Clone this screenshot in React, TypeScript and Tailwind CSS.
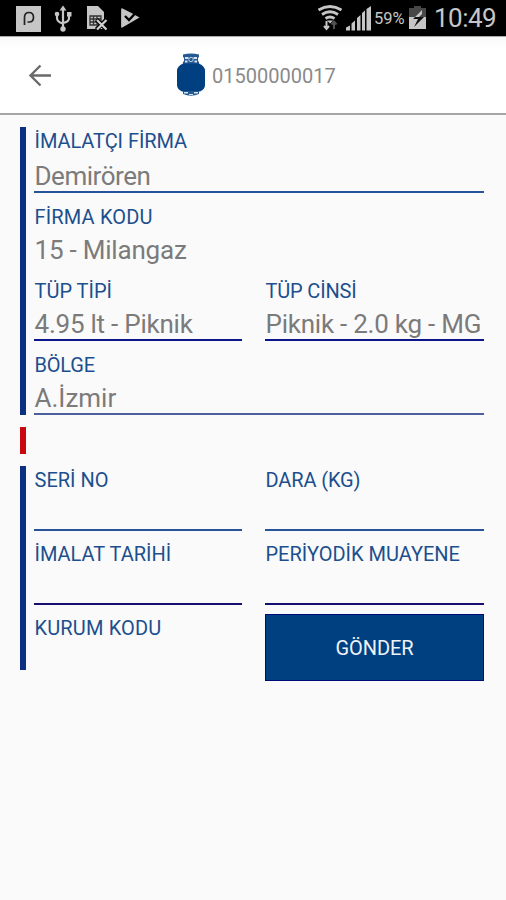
import type { ReactNode } from 'react';

function Label({ children, spacing = '' }: { children: ReactNode; spacing?: string }) {
  return (
    <div className={`h-6 whitespace-nowrap pl-[0.5px] text-[20px] leading-6 text-[#1c4f8e] ${spacing}`}>{children}</div>
  );
}

function Value({ children, className = '' }: { children?: ReactNode; className?: string }) {
  return (
    <div className={`h-[33px] whitespace-nowrap pl-[0.5px] text-[26px] leading-8 text-[#7b7b7b] ${className}`}>
      {children}
    </div>
  );
}

function StatusBar() {
  return (
    <header className="flex h-9 items-center bg-black text-[#c6c6c6]">
      <svg className="ml-4 h-[27px] w-[25px]" viewBox="0 0 25 27">
        <rect width="25" height="26" y="1" fill="#c6c6c6" />
        <path d="M8.500 20V12.500Q8.500 7.500 13 7.500t4.500 4.800-4.500 4.700H11.500" fill="none" stroke="#222" strokeWidth="1.700" />
      </svg>
      <svg className="ml-[13px] h-[28px] w-[18px]" viewBox="0 0 18 28" fill="none" stroke="#c6c6c6" strokeWidth="2.200">
        <path d="M9 4v20M3 10v4q0 4 6 5.500M15 10v4q0 4-6 5" />
        <path d="M9 1.500l3.500 5h-7z" fill="#c6c6c6" stroke="none" />
        <circle cx="9" cy="25" r="2.700" fill="#c6c6c6" stroke="none" />
        <circle cx="3" cy="10" r="2.300" fill="#c6c6c6" stroke="none" />
        <path d="M13 8h4.500v4.500H13z" fill="#c6c6c6" stroke="none" />
      </svg>
      <svg className="ml-[14px] h-[26px] w-[22px]" viewBox="0 0 22 26">
        <path d="M1 1h11l6 6v17H1z" fill="#c6c6c6" />
        <path d="M4 11h11v9H4zM4 14h11M4 17h11M7.500 11v9M11 11v9" stroke="#333" strokeWidth="1.300" fill="none" />
        <path d="M10.500 14.500l10 10M20.500 14.500l-10 10" stroke="#000" strokeWidth="4.500" />
        <path d="M11 15l9.500 9.500M20.500 15L11 24.500" stroke="#d0d0d0" strokeWidth="2.200" />
      </svg>
      <svg className="ml-3 h-[24px] w-[20px]" viewBox="0 0 20 24">
        <path d="M1 3l5 3v11l-5 4.500z" fill="#999" />
        <path d="M1.500 2l9 4.500 9 5L1.500 22z" fill="#c6c6c6" />
        <path d="M5 10l4 4 7.500-8" fill="none" stroke="#000" strokeWidth="2.400" />
      </svg>
      <div className="ml-auto mr-[10px] flex items-center">
        <svg className="h-[28px] w-[26px]" viewBox="0 0 26 28" fill="none" stroke="#c6c6c6" strokeWidth="2.800">
          <path d="M1.500 6q11.500-7 23 0M5 10.500q8-5.500 16 0M8.500 14.500q4.500-3 9 0" />
          <path d="M10 16.500h6l-3 3z" fill="#c6c6c6" stroke="none" />
          <path d="M9.500 17v8M7 22l2.500 3 2.500-3" strokeWidth="2" />
          <path d="M17 25v-7M14.500 20.500l2.500-3 2.500 3" stroke="#505050" strokeWidth="2" />
        </svg>
        <svg className="ml-[3px] h-[25px] w-[25px]" viewBox="0 0 25 25" fill="#c6c6c6">
          <path d="M0 24.500v-3l4-2v5zM5.500 24.500v-7L9 14.500v10zM11 24.500V12l3.500-3v15.500zM16 24.500V7l3-2.500v20zM20.500 24.500V3L25 0v24.500z" />
        </svg>
        <span className="ml-[3px] mt-[2px] w-[32px] whitespace-nowrap text-[16.500px] leading-5">59%</span>
        <svg className="ml-[3px] h-[24px] w-[17px]" viewBox="0 0 17 24">
          <path d="M5 0h7v2h5v9L0 12V2h5z" fill="#474747" />
          <path d="M0 11h17v12H0z" fill="#c6c6c6" />
          <path d="M13 4l-9 9h5l-4 8 10-10h-5z" fill="#111" />
          <path d="M13 4l-7 7h4l3-3z" fill="#c6c6c6" />
        </svg>
        <span className="ml-[8px] w-[62px] whitespace-nowrap text-[26px] leading-8 tracking-[-0.020em]">10:49</span>
      </div>
    </header>
  );
}

function Cylinder() {
  return (
    <svg className="h-[44px] w-[30px]" viewBox="0 0 30 44">
      <path d="M7 1.500q8-2 16 0v3h-1v4h1V11H7V8.500h1v-4H7z" fill="#245992" />
      <path d="M9 4h3.500v2H9zM17.500 4H21v2h-3.500zM9 7.500h2.500v2H9zM18.500 7.500H21v2h-2.500z" fill="#d5e1ee" />
      <circle cx="15" cy="6.500" r="2.200" fill="none" stroke="#b7cce1" />
      <path d="M1 18q0-5 6-7.500h16q6 2.500 6 7.500v14q0 4-5 6.500H6q-5-2.500-5-6.500z" fill="#003f80" />
      <path d="M7 38h16v3q-8 3.500-16 0z" fill="#245992" />
      <path d="M8 39h4v1.500H8zM18 39h4v1.500h-4zM13 41h4v1h-4z" fill="#d5e1ee" />
    </svg>
  );
}

export default function App() {
  return (
    <div className="h-[900px] w-[506px] overflow-hidden bg-[#fafafa] font-['Roboto',sans-serif]">
      <StatusBar />
      <div className="flex h-[79px] items-center border-b-2 border-t border-b-[#a5a5a5] border-t-[#aaa] bg-white bg-linear-to-b from-[#f8f8f8] to-white to-15%">
        <svg className="ml-[28px] h-6 w-6" viewBox="0 0 24 24" fill="none" stroke="#6a6a6a" strokeWidth="2.400">
          <path d="M23 12.500H3M12.500 2.500l-10 10 10 10" />
        </svg>
        <div className="ml-[124px] flex items-center">
          <Cylinder />
          <span className="ml-[6px] mt-[2px] text-[20px] leading-6 tracking-[0.001em] text-[#8a8a8a]">01500000017</span>
        </div>
      </div>

      <main className="pl-5 pr-[22px] pt-3">
        <section className="h-[288px] border-l-6 border-[#0c3082] pl-2">
          <div className="h-[76px] pt-[2px]">
            <Label spacing="tracking-[-0.003em]">İMALATÇI FİRMA</Label>
            <Value className="mt-[7px] border-b-2 border-[#26539a] tracking-[-0.018em]">Demirören</Value>
          </div>
          <div className="h-[74px] pt-[2px]">
            <Label spacing="tracking-[0.008em]">FİRMA KODU</Label>
            <Value className="mt-[5px] tracking-[-0.008em]">15 - Milangaz</Value>
          </div>
          <div className="grid h-[74px] grid-cols-[208px_219px] gap-x-[23px] pt-[2px]">
            <div>
              <Label>TÜP TİPİ</Label>
              <Value className="mt-[5px] border-b-2 border-[#0c168a] tracking-[-0.009em]">4.95 lt - Piknik</Value>
            </div>
            <div>
              <Label spacing="tracking-[-0.008em]">TÜP CİNSİ</Label>
              <Value className="mt-[5px] border-b-2 border-[#0c168a] tracking-[-0.009em]">Piknik - 2.0 kg - MG</Value>
            </div>
          </div>
          <div className="pt-[2px]">
            <Label spacing="tracking-[-0.010em]">BÖLGE</Label>
            <Value className="mt-[5px] border-b-2 border-[#4a5f9c]">A.İzmir</Value>
          </div>
        </section>

        <div className="mt-3 h-[27px] w-[6px] bg-[#c80a10]" />

        <section className="mt-3 h-[204px] border-l-6 border-[#0c3082] pl-2">
          <div className="grid h-[74px] grid-cols-[208px_219px] gap-x-[23px] pt-[2px]">
            <div>
              <Label>SERİ NO</Label>
              <Value className="mt-[6px] border-b-2 border-[#26539a]" />
            </div>
            <div>
              <Label spacing="tracking-[-0.006em]">DARA (KG)</Label>
              <Value className="mt-[6px] border-b-2 border-[#26539a]" />
            </div>
          </div>
          <div className="grid h-[74px] grid-cols-[208px_219px] gap-x-[23px] pt-[2px]">
            <div>
              <Label>İMALAT TARİHİ</Label>
              <Value className="mt-[6px] border-b-2 border-[#150f74]" />
            </div>
            <div>
              <Label>PERİYODİK MUAYENE</Label>
              <Value className="mt-[6px] border-b-2 border-[#150f74]" />
            </div>
          </div>
          <div className="grid grid-cols-[208px_219px] gap-x-[23px]">
            <div className="pt-[2px]">
              <Label spacing="tracking-[0.008em]">KURUM KODU</Label>
            </div>
            <button className="h-[67px] border border-[#000a78] bg-[#004080] text-[20px] tracking-[-0.005em] text-[#eef3fa]">GÖNDER</button>
          </div>
        </section>
      </main>
    </div>
  );
}
